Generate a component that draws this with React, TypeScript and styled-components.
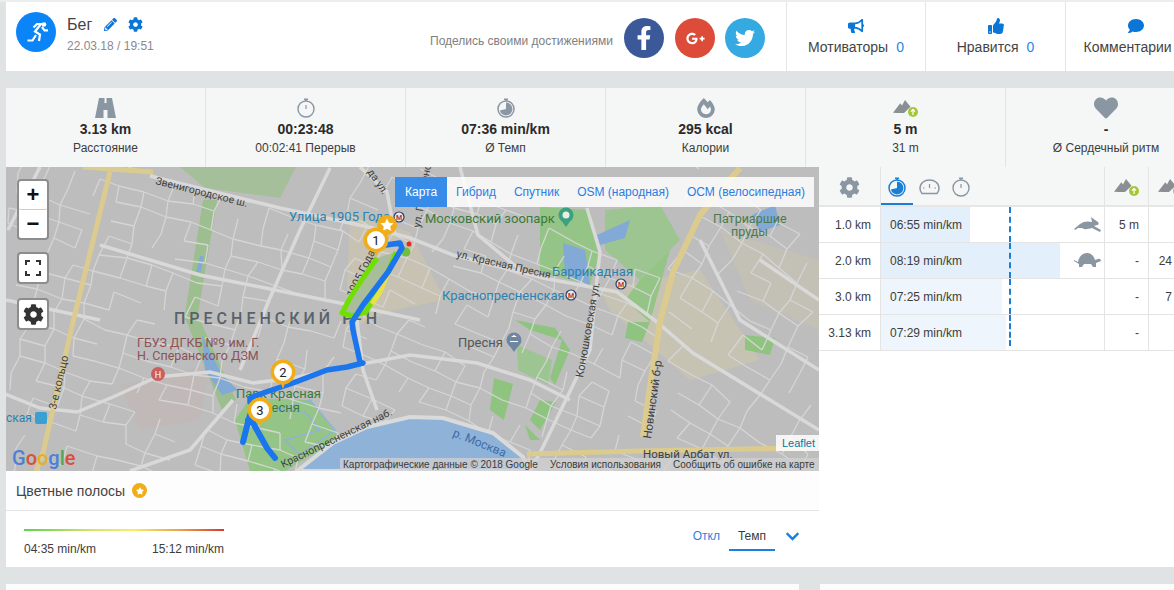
import React from "react";
import styled, { createGlobalStyle } from "styled-components";
import {
  FaBullhorn,
  FaChevronDown,
  FaCog,
  FaComment,
  FaFacebookF,
  FaFireAlt,
  FaGooglePlusG,
  FaHeart,
  FaPencilAlt,
  FaStar,
  FaThumbsUp,
  FaTwitter,
} from "react-icons/fa";

const GlobalStyle = createGlobalStyle`
  html, body {
    margin: 0;
    padding: 0;
    background: #dfe3e4;
    overflow: hidden;
  }
  body {
    font-family: "Liberation Sans", Arial, sans-serif;
    color: #333;
  }
`;

const Page = styled.div`
  width: 1174px;
  height: 590px;
  padding-left: 6px;
  box-sizing: border-box;
  border-top: 2px solid #eceeee;
  overflow: hidden;
`;

/* top header */
const Header = styled.header`
  display: flex;
  height: 69px;
  background: #fff;
`;

const Avatar = styled.div`
  width: 40px;
  height: 40px;
  margin: 10px 11px 0 10px;
  border-radius: 50%;
  background: #0a84f7;
  color: #fff;
  flex: none;
`;

const TitleBlock = styled.div`
  padding-top: 14px;
  width: 363px;
  flex: none;
`;

const TitleRow = styled.div`
  display: flex;
  align-items: center;
  height: 17px;
  color: #444;
  font-size: 16px;
  svg {
    color: #0a76d6;
  }
`;

const TitleText = styled.span`
  width: 37px;
`;

const EditSlot = styled.span`
  display: flex;
  width: 24px;
  font-size: 13px;
`;

const GearSlot = styled.span`
  display: flex;
  font-size: 15px;
`;

const DateText = styled.div`
  margin-top: 6px;
  font-size: 12px;
  color: #8a8a8a;
`;

const ShareBlock = styled.div`
  display: flex;
  align-items: flex-start;
  padding-top: 16px;
  width: 356px;
  flex: none;
`;

const ShareText = styled.span`
  margin: 16px 10px 0 0;
  font-size: 12px;
  color: #808080;
  white-space: nowrap;
  width: 184px;
`;

const Social = styled.a<{ $bg: string; $size: number }>`
  width: 40px;
  height: 40px;
  margin-right: 10px;
  border-radius: 50%;
  background: ${(p) => p.$bg};
  color: #fff;
  display: flex;
  align-items: center;
  justify-content: center;
  font-size: ${(p) => p.$size}px;
  &:first-of-type {
    margin-right: 11px;
  }
`;

const ActionCell = styled.div<{ $width: number }>`
  width: ${(p) => p.$width}px;
  flex: none;
  border-left: 1px solid #e5e5e5;
  box-sizing: border-box;
  display: flex;
  flex-direction: column;
  align-items: center;
  padding-top: 16px;
  white-space: nowrap;
  font-size: 14px;
  color: #444;
  svg {
    color: #0a76d6;
    font-size: 16px;
    margin-bottom: 5px;
  }
`;

const Count = styled.span`
  margin-left: 8px;
  color: #2a86e6;
`;

/* summary band */
const Stats = styled.section`
  display: flex;
  margin-top: 17px;
  height: 79px;
  background: #f5f6f6;
`;

const Stat = styled.div`
  width: 200px;
  flex: none;
  box-sizing: border-box;
  border-right: 1px solid #e4e4e4;
  display: flex;
  flex-direction: column;
  align-items: center;
  padding-top: 9px;
  &:last-child {
    border-right: 0;
  }
`;

const StatIcon = styled.div`
  height: 22px;
  display: flex;
  align-items: center;
  justify-content: center;
  color: #8a97a3;
`;

const StatValue = styled.div`
  margin-top: 2px;
  font-size: 14px;
  line-height: 16px;
  font-weight: 700;
  color: #2b2b2b;
`;

const StatLabel = styled.div`
  margin-top: 4px;
  font-size: 12px;
  line-height: 15px;
  color: #3c3c3c;
`;

const Columns = styled.div`
  display: flex;
  height: 400px;
`;

const LeftColumn = styled.div`
  width: 813px;
  flex: none;
  background: #fff;
`;

const MapBox = styled.div`
  position: relative;
  height: 304px;
  overflow: hidden;
  background: #bdbdbd;
`;

const MapSvg = styled.svg`
  display: block;
`;

const Label = styled.text<{ $color?: string; $size?: number; $spacing?: number; $weight?: number }>`
  font-family: Roboto, "Liberation Sans", sans-serif;
  font-size: ${(p) => p.$size ?? 12}px;
  font-weight: ${(p) => p.$weight ?? 400};
  letter-spacing: ${(p) => p.$spacing ?? 0}px;
  fill: ${(p) => p.$color ?? "#4a4a4a"};
`;

const ControlGroup = styled.div<{ $top: number }>`
  position: absolute;
  left: 11px;
  top: ${(p) => p.$top}px;
  border: 2px solid #8d8d8d;
  border-radius: 4px;
  background: #fff;
  width: 28px;
`;

const ControlButton = styled.div<{ $divided?: boolean }>`
  height: 28px;
  display: flex;
  align-items: center;
  justify-content: center;
  font-size: 22px;
  font-weight: 700;
  color: #111;
  border-bottom: ${(p) => (p.$divided ? "1px solid #ccc" : "0")};
  border-radius: 2px;
`;

const LayerTabs = styled.div`
  position: absolute;
  left: 389px;
  top: 10px;
  height: 30px;
  display: flex;
  background: rgba(255, 255, 255, 0.85);
  font-size: 12px;
  color: #2a7de1;
`;

const LayerTab = styled.div<{ $active?: boolean; $gap: number }>`
  display: flex;
  align-items: center;
  padding: 0 ${(p) => p.$gap}px 0 ${(p) => (p.$active ? 10 : 9)}px;
  background: ${(p) => (p.$active ? "#388ce9" : "transparent")};
  color: ${(p) => (p.$active ? "#fff" : "#2a7de1")};
  white-space: nowrap;
`;

const Attribution = styled.div`
  position: absolute;
  right: 0;
  bottom: 0;
  width: 479px;
  height: 13px;
  padding-left: 3px;
  box-sizing: border-box;
  display: flex;
  align-items: center;
  background: rgba(210, 210, 210, 0.75);
  font-size: 10px;
  color: #3a3a3a;
  white-space: nowrap;
`;

const AttributionItem = styled.span<{ $width: number }>`
  width: ${(p) => p.$width}px;
  flex: none;
`;

const LeafletTag = styled.div`
  position: absolute;
  right: 0;
  bottom: 20px;
  height: 16px;
  padding: 0 4px 0 6px;
  background: rgba(255, 255, 255, 0.85);
  font-size: 11px;
  line-height: 16px;
  color: #0078a8;
`;

const PanelTitle = styled.div`
  height: 40px;
  padding-left: 10px;
  display: flex;
  align-items: center;
  gap: 7px;
  box-sizing: border-box;
  border-bottom: 1px solid #e4e4e4;
  background: #fdfdfd;
  font-size: 14px;
  color: #444;
`;

const StarBadge = styled.span`
  width: 15px;
  height: 15px;
  border-radius: 50%;
  background: #f0ad17;
  color: #fff;
  display: flex;
  align-items: center;
  justify-content: center;
  font-size: 8px;
`;

const LegendRow = styled.div`
  display: flex;
  justify-content: space-between;
  padding: 18px 18px 0 18px;
`;

const Legend = styled.div`
  width: 200px;
`;

const LegendBar = styled.div`
  height: 2px;
  background: linear-gradient(90deg, #5bd24e 0%, #d8e46a 35%, #f5ee63 55%, #e9a24d 78%, #d8392b 100%);
`;

const LegendValues = styled.div`
  display: flex;
  justify-content: space-between;
  margin-top: 11px;
  font-size: 12px;
  color: #3d3d3d;
`;

const ModeSwitch = styled.div`
  display: flex;
  align-items: flex-start;
  font-size: 12px;
`;

const ModeOff = styled.span`
  color: #2d7fe0;
  margin: 0 9px 0 1px;
  line-height: 14px;
`;

const ModeOn = styled.span`
  width: 46px;
  height: 22px;
  box-sizing: border-box;
  text-align: center;
  line-height: 14px;
  color: #3a3a3a;
  border-bottom: 2px solid #1a7fe0;
`;

const Chevron = styled.span`
  display: flex;
  margin: 0 1px 0 10px;
  color: #1a7fe0;
  font-size: 15px;
  height: 14px;
  align-items: center;
`;

/* laps table */
const RightColumn = styled.div`
  flex: 1;
  min-width: 0;
  background: #fff;
  overflow: hidden;
`;

const LapGrid = styled.div`
  display: grid;
  grid-template-columns: 61px 224px 44px 44px;
  width: 373px;
`;

const HeadCell = styled.div<{ $border?: boolean }>`
  height: 40px;
  padding-top: 2px;
  box-sizing: border-box;
  background: #f5f6f6;
  border-bottom: 2px solid #e6e6e6;
  border-left: ${(p) => (p.$border ? "1px solid #e4e4e4" : "0")};
  display: flex;
  align-items: center;
  justify-content: center;
  color: #8a97a3;
`;

const TabsCell = styled(HeadCell)`
  justify-content: flex-start;
  padding-top: 0;
`;

const HeadTab = styled.div<{ $active?: boolean }>`
  width: 32px;
  height: 38px;
  box-sizing: border-box;
  display: flex;
  align-items: center;
  justify-content: center;
  padding-top: 4px;
  border-bottom: 2px solid ${(p) => (p.$active ? "#1a7fd4" : "transparent")};
  color: ${(p) => (p.$active ? "#1a7fd4" : "#8a97a3")};
`;

const Cell = styled.div<{ $border?: boolean; $pad?: number }>`
  height: 36px;
  box-sizing: border-box;
  border-bottom: 1px solid #e4e4e4;
  border-left: ${(p) => (p.$border ? "1px solid #e4e4e4" : "0")};
  display: flex;
  align-items: center;
  justify-content: flex-end;
  padding-right: ${(p) => p.$pad ?? 9}px;
  font-size: 12px;
  color: #3d3d3d;
  white-space: nowrap;
`;

const PaceCell = styled.div`
  position: relative;
  height: 36px;
  box-sizing: border-box;
  border-bottom: 1px solid #e4e4e4;
  border-left: 1px solid #e4e4e4;
  display: flex;
  align-items: center;
  padding-left: 9px;
  font-size: 12px;
  color: #3d3d3d;
`;

const PaceBar = styled.div<{ $strong: boolean }>`
  position: absolute;
  left: 0;
  top: 0;
  bottom: 0;
  background: ${(p) => (p.$strong ? "#e3effb" : "#eef5fc")};
`;

const PaceText = styled.span`
  position: relative;
`;

const AverageMark = styled.div<{ $short?: boolean }>`
  position: absolute;
  left: 128px;
  top: 0;
  bottom: ${(p) => (p.$short ? 4 : 0)}px;
  border-left: 2px dashed #1a7fd4;
`;

const PaceAnimal = styled.span`
  position: absolute;
  right: 3px;
  top: 0;
  bottom: 0;
  color: #8a97a3;
  display: flex;
  align-items: center;
`;

const LowerCards = styled.div`
  display: flex;
  margin-top: 17px;
  height: 10px;
`;

const LowerCard = styled.div<{ $width: number; $gap?: number }>`
  width: ${(p) => p.$width}px;
  margin-left: ${(p) => p.$gap ?? 0}px;
  background: #fcfcfc;
`;

/* drawn icons */
function Runner() {
  return (
    <svg width="40" height="40" viewBox="0 0 40 40" fill="none" stroke="currentColor" strokeWidth="2.200">
      <circle cx="28" cy="12.500" r="2.300" fill="currentColor" stroke="none" />
      <path d="M17.500 15.500l3.500-3.500h4l-6 7.500 5 3-1 6.500" />
      <path d="M26 15l2.500 3.300h3.500" />
      <path d="M11.500 28.500h5l3.500-5.500" />
    </svg>
  );
}

function RoadIcon() {
  return (
    <svg width="21" height="20" viewBox="0 0 21 20" fill="currentColor">
      <path d="M4 0H9.500V5H11.500V0H17L21 20H12.500V12H8.500V20H0z" />
    </svg>
  );
}

function Stopwatch({ size = 20 }: { size?: number }) {
  return (
    <svg width={size} height={size} viewBox="0 0 20 20" fill="none" stroke="currentColor">
      <circle cx="10" cy="11" r="8" strokeWidth="1.400" />
      <path d="M8 1.200h4M10 1.200v2" strokeWidth="1.400" />
      <path d="M10 7v4" strokeWidth="1.200" />
    </svg>
  );
}

function PaceWatch({ size = 20 }: { size?: number }) {
  return (
    <svg width={size} height={size} viewBox="0 0 20 20" fill="none" stroke="currentColor">
      <circle cx="10" cy="11" r="8" strokeWidth="1.500" />
      <path d="M8 1.200h4M10 1.200v2" strokeWidth="1.400" />
      <path d="M10 11V4.600a6.400 6.400 0 1 1-6.200 7.900z" fill="currentColor" stroke="none" />
    </svg>
  );
}

function Gauge() {
  return (
    <svg width="21" height="18" viewBox="0 0 21 18" fill="none" stroke="currentColor">
      <path d="M3 15.500C1.600 13.800 1 12 1 10.200 1 5.200 5.200 2 10.500 2S20 5.200 20 10.200c0 1.800-.6 3.600-2 5.300z" strokeWidth="1.500" />
      <path d="M10.500 6v4M4 10h1.500M15.500 10H17" strokeWidth="1.200" />
    </svg>
  );
}

function ClimbIcon() {
  return (
    <svg width="26" height="20" viewBox="0 0 26 20">
      <path d="M0 14.700L7.300 5.300L9 7.500L12 2L17.500 8.700L11 15H5z" fill="#8a8f94" />
      <circle cx="20" cy="14" r="5" fill="#a4c639" />
      <path d="M20 17v-5.400M18 13.600l2-2.200 2 2.200" fill="none" stroke="#fff" strokeWidth="1.200" />
    </svg>
  );
}

function Hare() {
  return (
    <svg width="27" height="16" viewBox="0 0 27 16" fill="currentColor">
      <path d="M0 12L6 7C10 4 14 4 18 5L17 0L21 3L24 5C25 6 25 8 23 8L20 9L27 13L26 15L18 11C14 12 11 13 8 11L4 11L1 13z" />
    </svg>
  );
}

function Turtle() {
  return (
    <svg width="27" height="15" viewBox="0 0 27 15" fill="currentColor">
      <path d="M4 9C5 3 9 0 13 0C17 0 20 3 21 7L24 6C26 5 27 7 27 8L22 10L22 14L19 14L17 11L10 11L8 14L5 14L5 11L0 8L0 7z" />
    </svg>
  );
}

function FullscreenIcon() {
  return (
    <svg width="16" height="16" viewBox="0 0 16 16" fill="none" stroke="#333" strokeWidth="2">
      <path d="M1 5V1H5M11 1H15V5M15 11V15H11M5 15H1V11" />
    </svg>
  );
}

/* map */
const mainRoads = [
  "M150 176L280 208L373 228L410 238L453 255L543 278L617 292L657 322",
  "M0 392L40 408L77 412L113 397L157 377L210 372L253 383L293 378L367 363L410 355L477 363L530 380L570 400",
  "M587 208L600 252L596 288L590 350L543 447L530 471",
  "M233 400L190 450L130 471",
  "M357 320L363 370L377 410",
  "M100 245L200 275L350 305L420 320",
  "M330 168L300 230L270 298L240 370",
  "M360 167L387 192L395 235",
  "M8 230L40 167",
  "M100 320L6 300",
  "M657 322L693 353L770 400L819 430",
  "M460 167L478 235L520 270",
  "M760 260L819 300",
  "M700 240L740 320L819 370",
];

// city blocks: a skewed street net with some edges left out
function streetNet(ox: number, oy: number, ux: number, uy: number, vx: number, vy: number, cols: number, rows: number, xMin: number, xMax: number) {
  const hash = (i: number, j: number) => Math.abs((i * 73) ^ (j * 179)) + i * j * 7;
  const point = (i: number, j: number) => [
    ox + i * ux + j * vx + (hash(i, j) % 7) - 3,
    oy + i * uy + j * vy + (hash(j, i) % 5) - 2,
  ];
  const out: string[] = [];
  for (let j = 0; j < rows; j++) {
    for (let i = 0; i < cols; i++) {
      const [x, y] = point(i, j);
      if (x < xMin || x > xMax) continue;
      if (hash(i, j) % 10 < 7) {
        const [x2, y2] = point(i + 1, j);
        if (x2 <= xMax) out.push(`M${x} ${y}L${x2} ${y2}`);
      }
      if (hash(j + 3, i) % 10 < 7) {
        const [x2, y2] = point(i, j + 1);
        if (x2 >= xMin) out.push(`M${x} ${y}L${x2} ${y2}`);
      }
    }
  }
  return out;
}

const minorRoads = [
  ...streetNet(30, 140, 24, 7, -5, 17, 18, 22, 6, 345),
  ...streetNet(330, 130, 22, 10, -7, 16, 18, 24, 340, 660),
  ...streetNet(640, 130, 20, 13, -10, 17, 14, 22, 662, 819),
];

function Metro({ x, y }: { x: number; y: number }) {
  return (
    <g>
      <circle cx={x} cy={y} r="5" fill="#e8e8e8" stroke="#2f3b63" strokeWidth="1.200" />
      <Label x={x} y={y + 2.500} textAnchor="middle" $size={7} $weight={700} $color="#b2362e">
        М
      </Label>
    </g>
  );
}

function Pin({ x, y, n }: { x: number; y: number; n: string }) {
  return (
    <g transform={`translate(${x} ${y})`}>
      <path d="M-9-8L0 17L9-8z" fill="#f0ad17" />
      <circle r="10.700" fill="#fff" stroke="#f0ad17" strokeWidth="3.400" />
      <Label x="0" y="4.500" textAnchor="middle" $color="#222" $size={13}>
        {n}
      </Label>
    </g>
  );
}

function MapDrawing() {
  return (
    <MapSvg width="813" height="304" viewBox="6 167 813 304">
      <rect x="6" y="167" width="813" height="304" fill="#bdbdbd" />
      {/* districts */}
      <path d="M350 215L410 232L445 300L395 310L345 330z" fill="#cfc6a9" opacity=".55" />
      <path d="M600 290L700 270L760 360L690 380L610 310z" fill="#d2c9aa" opacity=".5" />
      <path d="M720 230L819 260L819 330L750 300z" fill="#cfc6a9" opacity=".35" />
      <path d="M120 385L210 365L200 420L140 430z" fill="#c9b3b1" opacity=".4" />
      {/* parks */}
      <path d="M180 167L296 167L280 198L205 188z" fill="#a6bf9b" />
      <path d="M203 200L217 200L197 320L184 320z" fill="#9dbf8f" />
      <path d="M186 320L200 320L236 400L222 410z" fill="#9dbf8f" />
      <path d="M540 207L590 210L600 252L590 285L540 272z" fill="#94c586" />
      <path d="M605 210L660 205L680 240L640 280L605 250z" fill="#9cc592" />
      <path d="M640 280L670 250L650 322L625 300z" fill="#94c586" />
      <path d="M378 258L395 255L375 300L350 312z" fill="#a8bd9b" />
      <path d="M235 420L250 398L310 400L340 438L285 471L250 471z" fill="#94c586" />
      <path d="M515 320L555 328L570 350L555 385L550 378L562 340L530 330z" fill="#8fc480" />
      <path d="M517 345L552 360L548 385L518 370z" fill="#9cc592" />
      <path d="M494 378L513 384L504 420L490 410z" fill="#8fc480" />
      <path d="M540 400L556 402L540 430L530 420z" fill="#8fc480" />
      <path d="M525 425L540 440L530 440z" fill="#8fc480" />
      <path d="M628 322L650 322L642 342L625 338z" fill="#8fc480" />
      <path d="M745 335L775 338L770 355L745 350z" fill="#8fc480" />
      {/* water */}
      <path d="M200 256L204 256L201 272L196 272z" fill="#83aad6" />
      <path d="M202 335L222 375L238 390L222 395L205 370z" fill="#83aad6" />
      <path d="M563 243L585 250L590 285L565 275z" fill="#83aad6" />
      <path d="M597 235L630 220L625 238L600 245z" fill="#83aad6" />
      <path d="M752 215L775 205L780 225L760 232z" fill="#83aad6" />
      <path d="M275 410L310 400L335 430L300 455L285 440L320 430L305 412z" fill="none" stroke="#8fb2d9" strokeWidth="1.500" />
      {/* streets */}
      <g fill="none" stroke="#d5d5d5" strokeWidth="1.300">
        {minorRoads.map((d, i) => (
          <path key={i} d={d} />
        ))}
      </g>
      <g fill="none" stroke="#d9d9d9" strokeWidth="3.500">
        {mainRoads.map((d, i) => (
          <path key={i} d={d} />
        ))}
      </g>
      <path
        d="M297 471L333 443L367 427L410 417L443 418L493 433L523 457L530 471z"
        fill="#8fb2d9"
        stroke="#dadada"
        strokeWidth="4"
      />
      <g fill="none" stroke="#dccb8e" strokeWidth="5" strokeLinejoin="round">
        <path d="M83 167L153 172M110 172L92 245L73 322L43 453L36 471" />
        <path d="M740 168L700 215L673 272L660 322L648 400L643 437" strokeWidth="6" />
        <path d="M527 454L640 451L803 448" strokeWidth="5" />
      </g>
      {/* map labels */}
      <Label x="155" y="184" $size={10.500} $color="#3f3f3f" transform="rotate(14 155 184)">
        Звенигородское ш.
      </Label>
      <Label x="367" y="172" $size={10.500} $color="#3f3f3f" transform="rotate(55 367 172)">
        да ул.
      </Label>
      <Label x="420" y="228" $size={10.500} $color="#3f3f3f" transform="rotate(-80 420 228)">
        ул. Пресненс
      </Label>
      <Label x="289" y="221" $size={13} $color="#2b82b0">
        Улица 1905 Года
      </Label>
      <Metro x={399} y={217} />
      <Label x="425" y="223" $size={13} $color="#3b7a3a">
        Московский зоопарк
      </Label>
      <circle cx="566" cy="215" r="7.500" fill="#3da07f" />
      <circle cx="566" cy="215" r="3.500" fill="#e8efe8" />
      <path d="M561 220L566 227L571 220z" fill="#3da07f" />
      <Label x="713" y="223" $size={12.500} $color="#4c7a4c">
        Патриаршие
      </Label>
      <Label x="731" y="236" $size={12.500} $color="#4c7a4c">
        пруды
      </Label>
      <Label x="456" y="257" $size={10.500} $color="#3f3f3f" transform="rotate(13 456 257)">
        ул. Красная Пресня
      </Label>
      <Label x="552" y="276" $size={13} $color="#2b82b0">
        Баррикадная
      </Label>
      <Metro x={621} y={284} />
      <Label x="442" y="300" $size={13} $color="#2b82b0">
        Краснопресненская
      </Label>
      <Metro x={571} y={295} />
      <Label x="174" y="324" $size={16} $spacing={4} $weight={500} $color="#59626b">
        ПРЕСНЕНСКИЙ Р-Н
      </Label>
      <Label x="458" y="347" $size={13} $color="#555">
        Пресня
      </Label>
      <circle cx="514" cy="340" r="7.500" fill="#6f86a0" />
      <path d="M509 345L514 352L519 345z" fill="#6f86a0" />
      <path d="M510 342h8v-1h-8zM511 337h6l-3-2z" fill="#fff" />
      <Label x="137" y="347" $size={12.500} $color="#8c5257">
        ГБУЗ ДГКБ №9 им. Г.
      </Label>
      <Label x="137" y="360" $size={12.500} $color="#8c5257">
        Н. Сперанского ДЗМ
      </Label>
      <circle cx="158" cy="374" r="7" fill="#c9605f" />
      <Label x="158" y="378" textAnchor="middle" $size={9} $color="#fff">
        Н
      </Label>
      <Label x="236" y="398" $size={13} $color="#3b7a3a">
        Парк Красная
      </Label>
      <Label x="255" y="412" $size={13} $color="#3b7a3a">
        Пресня
      </Label>
      <Label x="6" y="422" $size={12} $color="#2b82b0">
        ская
      </Label>
      <rect x="35" y="412" width="12" height="12" rx="2" fill="#3aa0d0" />
      <Label x="56" y="410" $size={11} $color="#3f3f3f" transform="rotate(-77 56 410)">
        3-е кольцо
      </Label>
      <Label x="353" y="298" $size={11} $color="#3f3f3f" transform="rotate(-64 353 298)">
        1905 Года
      </Label>
      <Label x="583" y="378" $size={11} $color="#3f3f3f" transform="rotate(-80 583 378)">
        Конюшковская ул.
      </Label>
      <Label x="651" y="439" $size={11.500} $color="#3f3f3f" transform="rotate(-82 651 439)">
        Новинский б-р
      </Label>
      <Label x="643" y="458" $size={11.500} $color="#3f3f3f">
        Новый Арбат ул.
      </Label>
      <Label x="452" y="436" $size={12} $color="#3a6ca8" transform="rotate(22 452 436)">
        р. Москва
      </Label>
      <Label x="283" y="468" $size={10.500} $color="#3f3f3f" transform="rotate(-26 283 468)">
        Краснопресненская наб.
      </Label>
      {/* route */}
      <path d="M377 258L363 278L350 298L342 313L352 316L366 312L388 272L396 252" fill="#a9bd9b" stroke="#6fe000" strokeWidth="5" strokeLinejoin="round" />
      <path d="M390 268L380 292L372 304" fill="none" stroke="#e6e04a" strokeWidth="5" />
      <path d="M392 264L388 272" fill="none" stroke="#e0572a" strokeWidth="4" />
      <circle cx="406" cy="252" r="4.500" fill="#6fbf3c" />
      <circle cx="409" cy="244" r="2.500" fill="#e62b1e" />
      <path
        d="M386 245L400 243L402 248L388 272L363 305L352 322L353 330L360 362L363 363L347 367L327 370L293 383L263 393L250 398L250 402"
        fill="none"
        stroke="#1b75ec"
        strokeWidth="5.500"
        strokeLinejoin="round"
        strokeLinecap="round"
      />
      <path
        d="M250 415L248 422L243 442M248 420L253 423L267 448L275 458"
        fill="none"
        stroke="#1b75ec"
        strokeWidth="6"
        strokeLinejoin="round"
        strokeLinecap="round"
      />
      <circle cx="387" cy="225" r="10" fill="#f0ad17" />
      <path d="M387 218.500l2 4.300 4.700.5-3.500 3.200 1 4.600-4.200-2.400-4.200 2.400 1-4.600-3.500-3.200 4.700-.5z" fill="#fff" />
      <Pin x={376} y={240} n="1" />
      <Pin x={283} y={372} n="2" />
      <Pin x={260} y={410} n="3" />
      {/* google logo */}
      <Label x="12" y="465" $size={20} $weight={500}>
        <tspan fill="#4a80d8">G</tspan>
        <tspan fill="#d9503f">o</tspan>
        <tspan fill="#e0b030">o</tspan>
        <tspan fill="#4a80d8">g</tspan>
        <tspan fill="#4fa55a">l</tspan>
        <tspan fill="#d9503f">e</tspan>
      </Label>
    </MapSvg>
  );
}

const laps = [
  { dist: "1.0 km", pace: "06:55 min/km", bar: 89, strong: true, animal: "hare", up: "5 m", down: "" },
  { dist: "2.0 km", pace: "08:19 min/km", bar: 179, strong: true, animal: "turtle", up: "-", down: "24" },
  { dist: "3.0 km", pace: "07:25 min/km", bar: 121, strong: false, animal: "", up: "-", down: "7" },
  { dist: "3.13 km", pace: "07:29 min/km", bar: 125, strong: false, animal: "", up: "-", down: "" },
];

export default function App() {
  return (
    <Page>
      <GlobalStyle />
      <Header>
        <Avatar>
          <Runner />
        </Avatar>
        <TitleBlock>
          <TitleRow>
            <TitleText>Бег</TitleText>
            <EditSlot>
              <FaPencilAlt />
            </EditSlot>
            <GearSlot>
              <FaCog />
            </GearSlot>
          </TitleRow>
          <DateText>22.03.18 / 19:51</DateText>
        </TitleBlock>
        <ShareBlock>
          <ShareText>Поделись своими достижениями</ShareText>
          <Social $bg="#3b5998" $size={24}>
            <FaFacebookF />
          </Social>
          <Social $bg="#dd4b39" $size={19}>
            <FaGooglePlusG />
          </Social>
          <Social $bg="#35a9e1" $size={20}>
            <FaTwitter />
          </Social>
        </ShareBlock>
        <ActionCell $width={139}>
          <FaBullhorn />
          <span>
            Мотиваторы<Count>0</Count>
          </span>
        </ActionCell>
        <ActionCell $width={140}>
          <FaThumbsUp />
          <span>
            Нравится<Count>0</Count>
          </span>
        </ActionCell>
        <ActionCell $width={140}>
          <FaComment />
          <span>
            Комментарии<Count>0</Count>
          </span>
        </ActionCell>
      </Header>

      <Stats>
        <Stat>
          <StatIcon>
            <RoadIcon />
          </StatIcon>
          <StatValue>3.13 km</StatValue>
          <StatLabel>Расстояние</StatLabel>
        </Stat>
        <Stat>
          <StatIcon>
            <Stopwatch />
          </StatIcon>
          <StatValue>00:23:48</StatValue>
          <StatLabel>00:02:41 Перерыв</StatLabel>
        </Stat>
        <Stat>
          <StatIcon>
            <PaceWatch />
          </StatIcon>
          <StatValue>07:36 min/km</StatValue>
          <StatLabel>Ø Темп</StatLabel>
        </Stat>
        <Stat>
          <StatIcon>
            <FaFireAlt size={20} />
          </StatIcon>
          <StatValue>295 kcal</StatValue>
          <StatLabel>Калории</StatLabel>
        </Stat>
        <Stat>
          <StatIcon>
            <ClimbIcon />
          </StatIcon>
          <StatValue>5 m</StatValue>
          <StatLabel>31 m</StatLabel>
        </Stat>
        <Stat>
          <StatIcon>
            <FaHeart size={24} />
          </StatIcon>
          <StatValue>-</StatValue>
          <StatLabel>Ø Сердечный ритм</StatLabel>
        </Stat>
      </Stats>

      <Columns>
        <LeftColumn>
          <MapBox>
            <MapDrawing />
            <ControlGroup $top={12}>
              <ControlButton $divided>+</ControlButton>
              <ControlButton>−</ControlButton>
            </ControlGroup>
            <ControlGroup $top={85}>
              <ControlButton>
                <FullscreenIcon />
              </ControlButton>
            </ControlGroup>
            <ControlGroup $top={131}>
              <ControlButton>
                <FaCog size={21} color="#333" />
              </ControlButton>
            </ControlGroup>
            <LayerTabs>
              <LayerTab $active $gap={10}>Карта</LayerTab>
              <LayerTab $gap={9}>Гибрид</LayerTab>
              <LayerTab $gap={9}>Спутник</LayerTab>
              <LayerTab $gap={9}>OSM (народная)</LayerTab>
              <LayerTab $gap={9}>ОСМ (велосипедная)</LayerTab>
            </LayerTabs>
            <LeafletTag>Leaflet</LeafletTag>
            <Attribution>
              <AttributionItem $width={207}>Картографические данные © 2018 Google</AttributionItem>
              <AttributionItem $width={123}>Условия использования</AttributionItem>
              <AttributionItem $width={145}>Сообщить об ошибке на карте</AttributionItem>
            </Attribution>
          </MapBox>
          <PanelTitle>
            Цветные полосы
            <StarBadge>
              <FaStar />
            </StarBadge>
          </PanelTitle>
          <LegendRow>
            <Legend>
              <LegendBar />
              <LegendValues>
                <span>04:35 min/km</span>
                <span>15:12 min/km</span>
              </LegendValues>
            </Legend>
            <ModeSwitch>
              <ModeOff>Откл</ModeOff>
              <ModeOn>Темп</ModeOn>
              <Chevron>
                <FaChevronDown />
              </Chevron>
            </ModeSwitch>
          </LegendRow>
        </LeftColumn>

        <RightColumn>
          <LapGrid>
            <HeadCell>
              <FaCog size={21} />
            </HeadCell>
            <TabsCell $border>
              <HeadTab $active>
                <PaceWatch />
              </HeadTab>
              <HeadTab>
                <Gauge />
              </HeadTab>
              <HeadTab>
                <Stopwatch />
              </HeadTab>
            </TabsCell>
            <HeadCell $border>
              <ClimbIcon />
            </HeadCell>
            <HeadCell $border>
              <ClimbIcon />
            </HeadCell>
            {laps.map((lap, i) => (
              <React.Fragment key={lap.dist}>
                <Cell>{lap.dist}</Cell>
                <PaceCell>
                  <PaceBar $strong={lap.strong} style={{ width: lap.bar }} />
                  <PaceText>{lap.pace}</PaceText>
                  <AverageMark $short={i === laps.length - 1} />
                  {lap.animal === "hare" && (
                    <PaceAnimal>
                      <Hare />
                    </PaceAnimal>
                  )}
                  {lap.animal === "turtle" && (
                    <PaceAnimal>
                      <Turtle />
                    </PaceAnimal>
                  )}
                </PaceCell>
                <Cell $border>{lap.up}</Cell>
                <Cell $border $pad={20}>
                  {lap.down}
                </Cell>
              </React.Fragment>
            ))}
          </LapGrid>
        </RightColumn>
      </Columns>

      <LowerCards>
        <LowerCard $width={793} />
        <LowerCard $width={354} $gap={21} />
      </LowerCards>
    </Page>
  );
}
